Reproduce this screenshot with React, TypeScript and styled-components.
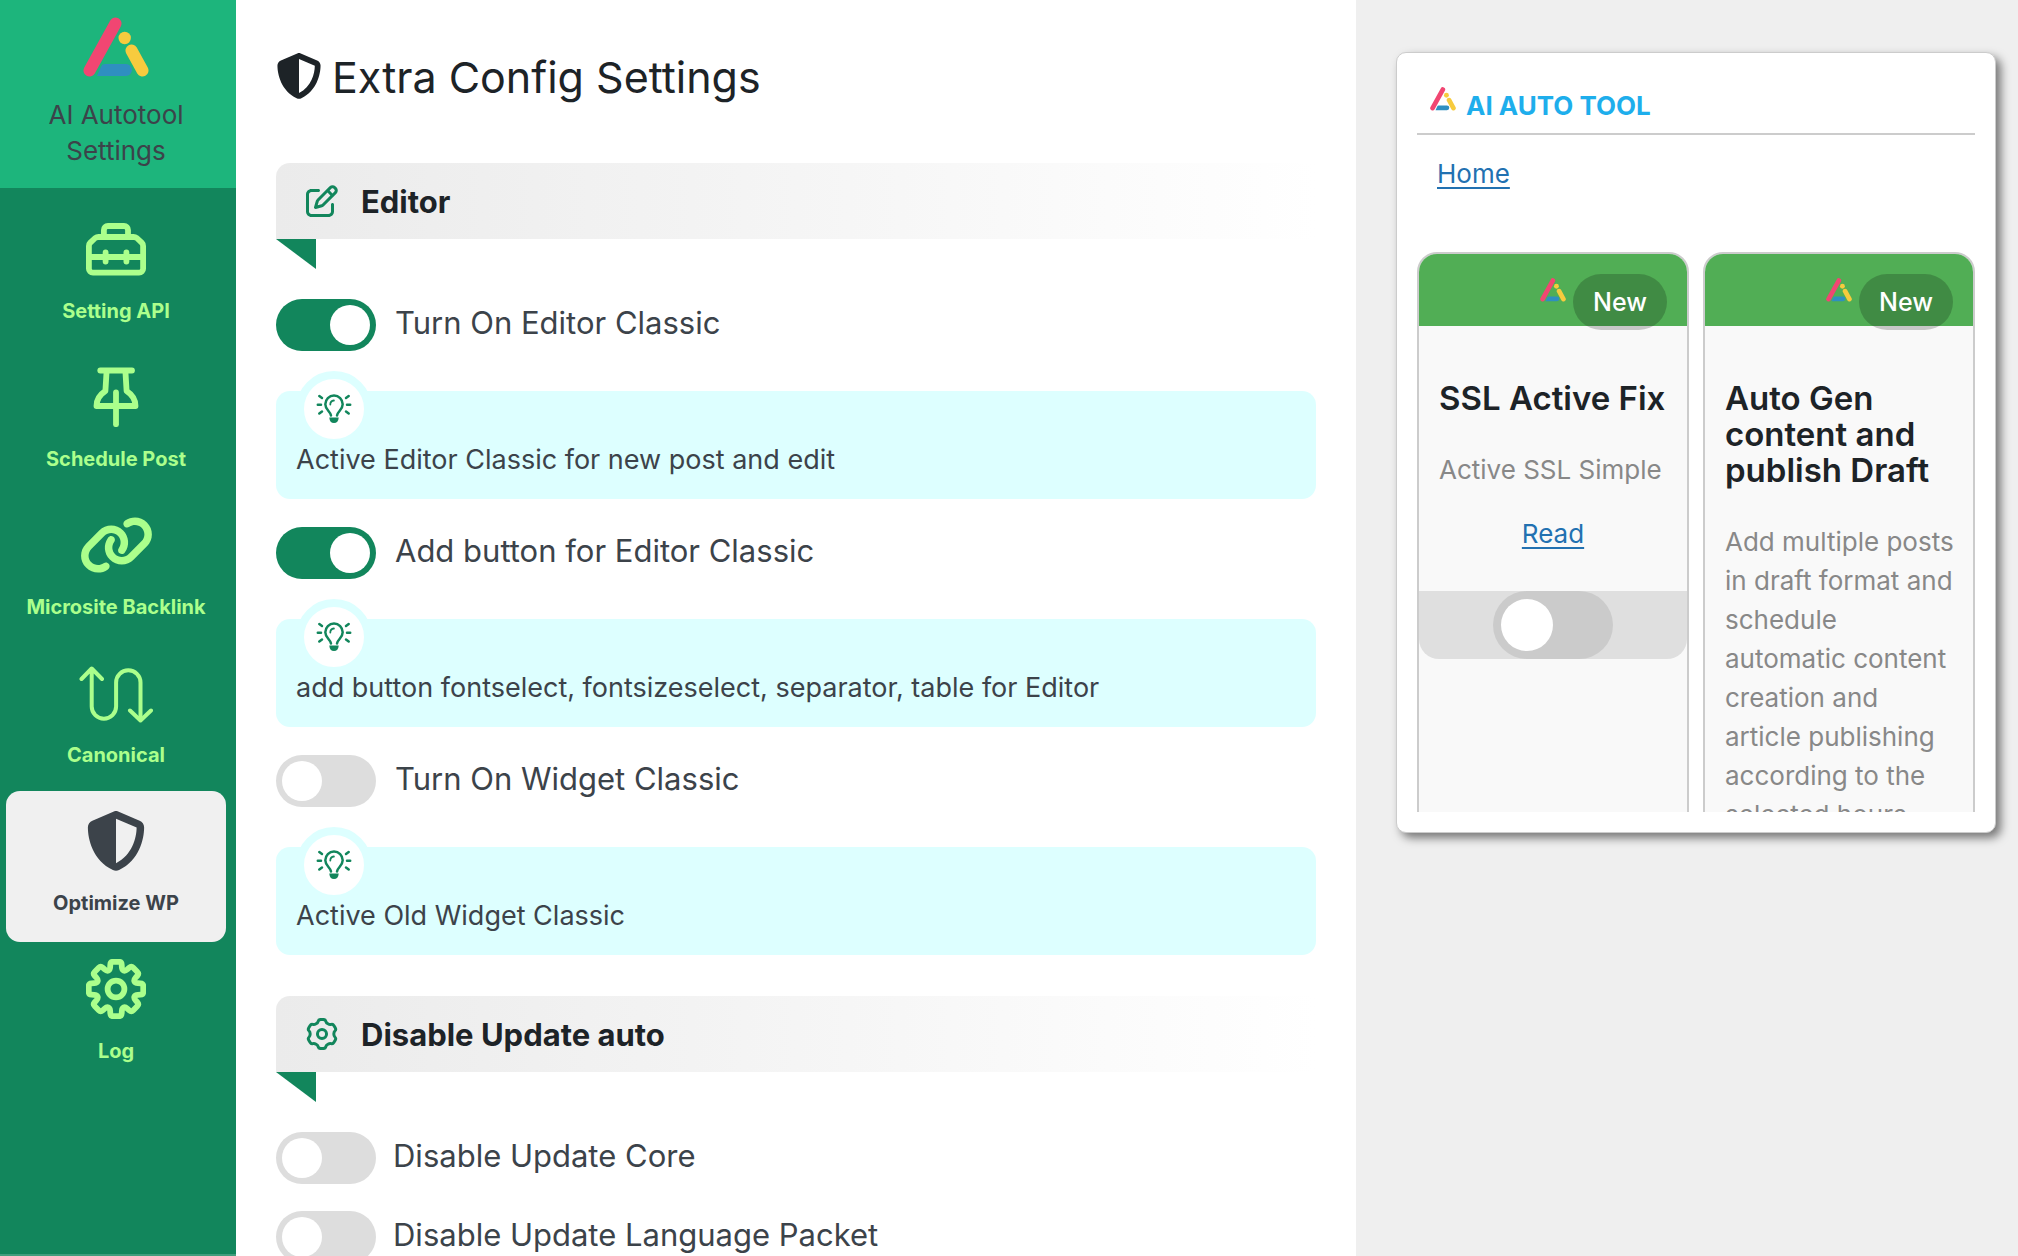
import React, { useId, useState } from "react";
import styled, { createGlobalStyle, css } from "styled-components";
import { FaLink, FaRegPenToSquare, FaShieldHalved } from "react-icons/fa6";

const color = {
  sidebar: "#12865c",
  brand: "#1db57c",
  lime: "#abff8c",
  ink: "#1d2327",
  text: "#3c434a",
  link: "#2271b1",
  page: "#efefef",
  tip: "#ddffff",
  line: "#cccccc",
};

const GlobalStyle = createGlobalStyle`
  *, *::before, *::after { box-sizing: border-box; }
  body {
    margin: 0;
    overflow: hidden;
    background: ${color.page};
    color: ${color.text};
    font-family: Inter, "Liberation Sans", sans-serif;
    font-size: 26px;
  }
`;

/* ---------- drawings ---------- */

type Point = [number, number];

/** Closed polygon path with every corner rounded by up to `r`. */
const roundedPath = (pts: Point[], r: number) => {
  const toward = (a: Point, b: Point): Point => {
    const d = Math.hypot(b[0] - a[0], b[1] - a[1]);
    const k = Math.min(r, d / 2) / d;
    return [a[0] + (b[0] - a[0]) * k, a[1] + (b[1] - a[1]) * k];
  };
  return (
    pts
      .map((p, i) => {
        const before = toward(p, pts[(i + pts.length - 1) % pts.length]);
        const after = toward(p, pts[(i + 1) % pts.length]);
        return `${i ? "L" : "M"}${before.join(" ")}Q${p.join(" ")} ${after.join(" ")}`;
      })
      .join("") + "Z"
  );
};

const gearPath = (
  teeth: number,
  outer: number,
  outerHalf: number,
  inner: number,
  innerHalf: number,
  r: number,
) => {
  const pts: Point[] = [];
  for (let i = 0; i < teeth; i++) {
    const mid = (360 / teeth) * i - 90;
    const at = (radius: number, deg: number) => {
      const a = (deg * Math.PI) / 180;
      pts.push([30 + radius * Math.cos(a), 30 + radius * Math.sin(a)]);
    };
    at(inner, mid - innerHalf);
    at(outer, mid - outerHalf);
    at(outer, mid + outerHalf);
    at(inner, mid + innerHalf);
  }
  return roundedPath(pts, r);
};

const Logo = ({ width }: { width: number }) => (
  <svg width={width} viewBox="0 0 66 60" aria-hidden="true">
    <path d="M20 47H43a6 6 0 0 1 0 12H14L18 50Q19 47 22 47Z" fill="#2f8fc0" />
    <path d="M32.500 6.500L6.500 53.500" stroke="#f14672" strokeWidth="12" strokeLinecap="round" />
    <circle cx="41.700" cy="21" r="6.200" fill="#f7cb3e" />
    <path d="M48.500 33.500L59.500 53.500" stroke="#f7cb3e" strokeWidth="12" strokeLinecap="round" />
  </svg>
);

const Stroke = styled.svg`
  fill: none;
  stroke: currentColor;
  stroke-linecap: round;
  stroke-linejoin: round;
`;

const ToolboxIcon = () => (
  <Stroke width="60" height="60" viewBox="0 0 60 60" strokeWidth="5.8">
    <path d="M17.900 17.500V11a4 4 0 0 1 4-4H38a4 4 0 0 1 4 4V17.500" />
    <path d="M2.900 27Q2.900 25 4.300 23.600L9.200 19Q10.600 18 12.500 18H47.500Q49.400 18 50.800 19L55.700 23.600Q57.100 25 57.100 27V49.700a4 4 0 0 1-4 4H6.900a4 4 0 0 1-4-4Z" />
    <path d="M3 38H57M19.600 33.500V42.500M40.400 33.500V42.500" />
  </Stroke>
);

const PinIcon = () => (
  <Stroke width="60" height="60" viewBox="0 0 60 60" strokeWidth="5.800">
    <path d="M14.300 3.500H46" />
    <path d="M20.600 4L19.400 24Q10.500 29.800 10.500 39H49.500Q49.500 29.800 40.600 24L39.400 4" />
    <path d="M30 25.500V57.200" />
  </Stroke>
);

const RouteIcon = () => (
  <Stroke width="74" height="60" viewBox="0 0 74 60" strokeWidth="4">
    <path d="M2.500 16L12.700 5.500L23 16M12.700 6V43.500a12.200 12.200 0 0 0 24.400 0V19.500a12.200 12.200 0 0 1 24.400 0V57" />
    <path d="M51 47.500L61.500 57.500L72 47.500" />
  </Stroke>
);

const CogIcon = () => (
  <Stroke width="60" height="60" viewBox="0 0 60 60" strokeWidth="5.800">
    <path d={gearPath(8, 27.8, 11.5, 20, 17.5, 2.8)} />
    <circle cx="30" cy="30" r="8.400" />
  </Stroke>
);

const SmallCogIcon = () => (
  <Stroke width="32" height="32" viewBox="0 0 60 60" strokeWidth="5.600">
    <path d={gearPath(6, 28, 13, 22.5, 20, 4)} />
    <circle cx="30" cy="30" r="8.500" />
  </Stroke>
);

const BulbIcon = () => (
  <Stroke width="36" height="30" viewBox="0 0 36 30" strokeWidth="2.500">
    <path d="M15 21.500C14.500 17.500 9.300 15.800 9.300 10.300a8.700 8.700 0 0 1 17.400 0C26.700 15.800 21.500 17.500 21 21.500" />
    <path d="M14.300 10.500a4 4 0 0 1 3.600-4" strokeWidth="1.800" />
    <path d="M13.300 23.500H22.700Q22.300 29 18 29Q13.700 29 13.300 23.500Z" fill="currentColor" stroke="none" />
    <path d="M1.800 10.800H5M31 10.800H34.200M3.300 2L6 4M32.700 2L30 4M3.300 19.500L6 17.500M32.700 19.500L30 17.500" />
  </Stroke>
);

/* ---------- layout ---------- */

const Page = styled.div`
  display: grid;
  grid-template-columns: 236px minmax(0, 1120fr) minmax(0, 662fr);
  height: 100vh;
  overflow: hidden;
`;

const Sidebar = styled.aside`
  background: ${color.sidebar};
  border-bottom: 2px solid #419e7d;
`;

const Brand = styled.div`
  display: flex;
  flex-direction: column;
  align-items: center;
  gap: 20px;
  height: 188px;
  padding: 17px 40px 0 36px;
  background: ${color.brand};
  font-size: 26px;
  line-height: 36px;
  text-align: center;
`;

const Nav = styled.nav`
  display: flex;
  flex-direction: column;
  padding: 11px 10px 0 6px;
`;

const NavItem = styled.a<{ $active?: boolean }>`
  display: flex;
  flex-direction: column;
  align-items: center;
  gap: 16px;
  height: 151px;
  margin-bottom: -3px;
  padding-top: 20px;
  border-radius: 14px;
  color: ${(p) => (p.$active ? color.text : color.lime)};
  background: ${(p) => (p.$active ? "#f0f0f0" : "transparent")};
  font-size: 20px;
  font-weight: 700;
  line-height: 32px;
  text-decoration: none;
  white-space: nowrap;
  svg { flex: none; }
`;

const WideLinkIcon = styled(FaLink)`
  width: 75px;
  height: 60px;
`;

const Main = styled.main`
  padding: 48px 40px 0;
  background: #ffffff;
  overflow: hidden;
`;

const Title = styled.h1`
  display: flex;
  align-items: center;
  gap: 10px;
  margin: 0 0 60px;
  color: ${color.ink};
  font-size: 43px;
  font-weight: 400;
  line-height: 55px;
  span { padding-top: 4px; line-height: 51px; }
`;

const SectionHead = styled.h2`
  position: relative;
  display: flex;
  align-items: center;
  gap: 23px;
  height: 76px;
  margin: 0 0 60px;
  padding: 0 30px;
  border-radius: 14px 0 0 0;
  background: linear-gradient(90deg, #ebebeb, #ffffff);
  color: ${color.ink};
  font-size: 31px;
  font-weight: 700;
  svg { flex: none; color: ${color.sidebar}; }
  &::after {
    content: "";
    position: absolute;
    top: 100%;
    left: 0;
    width: 40px;
    height: 30px;
    background: ${color.sidebar};
    clip-path: polygon(0 0, 100% 0, 100% 100%);
  }
`;

const OptionRow = styled.div<{ $gap: number }>`
  display: flex;
  align-items: center;
  gap: ${(p) => p.$gap}px;
  margin-bottom: 27px;
`;

const OptionLabel = styled.label`
  padding-bottom: 4px;
  font-size: 31px;
  line-height: 40px;
`;

const switchSizes = {
  regular: css`
    --w: 100px; --h: 52px; --knob: 40px; --inset: 6px; --off: #dddddd;
  `,
  large: css`
    --w: 120px; --h: 68px; --knob: 52px; --inset: 8px; --off: #cbcbcb;
  `,
};

const Switch = styled.input.attrs({ type: "checkbox" })<{ $size: keyof typeof switchSizes }>`
  ${(p) => switchSizes[p.$size]}
  appearance: none;
  flex: none;
  display: flex;
  align-items: center;
  width: var(--w);
  height: var(--h);
  margin: 0;
  padding: 0 var(--inset);
  border-radius: 34px;
  background: var(--off);
  cursor: pointer;
  &::before {
    content: "";
    width: var(--knob);
    height: var(--knob);
    border-radius: 50%;
    background: #ffffff;
  }
  &:checked {
    justify-content: flex-end;
    background: ${color.sidebar};
  }
`;

const Tip = styled.p`
  position: relative;
  height: 108px;
  margin: 40px 0 28px;
  padding: 51px 20px 0;
  border-radius: 14px;
  background: ${color.tip};
  font-size: 27px;
  line-height: 36px;
`;

const TipBadge = styled.span`
  position: absolute;
  top: -20px;
  left: 20px;
  display: flex;
  align-items: center;
  justify-content: center;
  width: 76px;
  height: 76px;
  border: 8px solid ${color.tip};
  border-radius: 50%;
  background: #ffffff;
  color: ${color.sidebar};
`;

const Section = styled.section`
  & + & { margin-top: 41px; }
`;

const Aside = styled.aside`
  padding: 52px 22px 0 40px;
`;

const Panel = styled.section`
  height: 781px;
  padding: 20px;
  border: 1px solid ${color.line};
  border-radius: 10px;
  background: #ffffff;
  box-shadow: 5px 5px 10px rgba(0, 0, 0, 0.5);
`;

const PanelClip = styled.div`
  height: 100%;
  overflow: hidden;
`;

const PanelTitle = styled.h2`
  display: flex;
  align-items: flex-start;
  gap: 10px;
  margin: 0;
  padding: 14px 13px 8px;
  border-bottom: 2px solid ${color.line};
  color: #1eaeec;
  font-size: 26px;
  font-weight: 700;
  line-height: 38px;
`;

const LinkText = styled.a`
  color: ${color.link};
  line-height: 40px;
  text-decoration: underline;
  text-decoration-thickness: 2px;
  text-underline-offset: 4px;
`;

const HomeBar = styled.div`
  padding: 19px 20px 58px;
`;

const Cards = styled.div`
  display: grid;
  grid-template-columns: 1fr 1fr;
  gap: 14px;
`;

const Card = styled.article`
  min-height: 620px;
  border: 2px solid ${color.line};
  border-radius: 20px;
  background: #f9f9f9;
`;

const CardTop = styled.header`
  display: flex;
  align-items: flex-start;
  justify-content: flex-end;
  gap: 7px;
  height: 72px;
  padding: 20px 20px 0;
  border-radius: 18px 18px 0 0;
  background: #51ae55;
  svg { flex: none; margin-top: 4px; }
`;

const NewBadge = styled.span`
  padding: 10px 20px;
  border-radius: 28px;
  background: rgba(0, 0, 0, 0.2);
  color: #ffffff;
  font-size: 25px;
  font-weight: 500;
  line-height: 36px;
`;

const CardBody = styled.div`
  padding: 54px 16px 0 20px;
  h3 {
    margin: 0 0 34px;
    color: ${color.ink};
    font-size: 33px;
    font-weight: 600;
    line-height: 36px;
  }
  p {
    margin: 0 0 25px;
    color: #888888;
    line-height: 39px;
  }
`;

const ReadLine = styled.div`
  text-align: center;
`;

const CardSwitch = styled.div`
  display: flex;
  justify-content: center;
  margin-top: 37px;
  border-radius: 0 0 20px 20px;
  background: #dfdfdf;
`;

/* ---------- parts ---------- */

interface OptionProps {
  label: string;
  tip?: string;
  on?: boolean;
}

const Option = ({ label, tip, on = false }: OptionProps) => {
  const id = useId();
  const [checked, setChecked] = useState(on);
  return (
    <>
      <OptionRow $gap={tip ? 19 : 17}>
        <Switch id={id} $size="regular" checked={checked} onChange={() => setChecked(!checked)} />
        <OptionLabel htmlFor={id}>{label}</OptionLabel>
      </OptionRow>
      {tip && (
        <Tip>
          <TipBadge><BulbIcon /></TipBadge>
          {tip}
        </Tip>
      )}
    </>
  );
};

const navItems = [
  { label: "Setting API", icon: <ToolboxIcon /> },
  { label: "Schedule Post", icon: <PinIcon /> },
  { label: "Microsite Backlink", icon: <WideLinkIcon /> },
  { label: "Canonical", icon: <RouteIcon /> },
  { label: "Optimize WP", icon: <FaShieldHalved size={60} />, active: true },
  { label: "Log", icon: <CogIcon /> },
];

const tools = [
  { title: "SSL Active Fix", text: "Active SSL Simple" },
  {
    title: "Auto Gen content and publish Draft",
    text: "Add multiple posts in draft format and schedule automatic content creation and article publishing according to the selected hours",
  },
];

export default function App() {
  return (
    <>
      <GlobalStyle />
      <Page>
        <Sidebar>
          <Brand>
            <Logo width={66} />
            <span>AI Autotool Settings</span>
          </Brand>
          <Nav>
            {navItems.map((item) => (
              <NavItem key={item.label} href="#" $active={item.active}>
                {item.icon}
                {item.label}
              </NavItem>
            ))}
          </Nav>
        </Sidebar>

        <Main>
          <Title>
            <FaShieldHalved size={46} />
            <span>Extra Config Settings</span>
          </Title>
          <Section>
            <SectionHead><FaRegPenToSquare size={32} />Editor</SectionHead>
            <Option on label="Turn On Editor Classic" tip="Active Editor Classic for new post and edit" />
            <Option
              on
              label="Add button for Editor Classic"
              tip="add button fontselect, fontsizeselect, separator, table for Editor"
            />
            <Option label="Turn On Widget Classic" tip="Active Old Widget Classic" />
          </Section>
          <Section>
            <SectionHead><SmallCogIcon />Disable Update auto</SectionHead>
            <Option label="Disable Update Core" />
            <Option label="Disable Update Language Packet" />
          </Section>
        </Main>

        <Aside>
          <Panel>
            <PanelClip>
              <PanelTitle><Logo width={26} />AI AUTO TOOL</PanelTitle>
              <HomeBar><LinkText href="#">Home</LinkText></HomeBar>
              <Cards>
                {tools.map((tool) => (
                  <Card key={tool.title}>
                    <CardTop>
                      <Logo width={26} />
                      <NewBadge>New</NewBadge>
                    </CardTop>
                    <CardBody>
                      <h3>{tool.title}</h3>
                      <p>{tool.text}</p>
                    </CardBody>
                    <ReadLine><LinkText href="#">Read</LinkText></ReadLine>
                    <CardSwitch>
                      <Switch $size="large" aria-label={tool.title} />
                    </CardSwitch>
                  </Card>
                ))}
              </Cards>
            </PanelClip>
          </Panel>
        </Aside>
      </Page>
    </>
  );
}
